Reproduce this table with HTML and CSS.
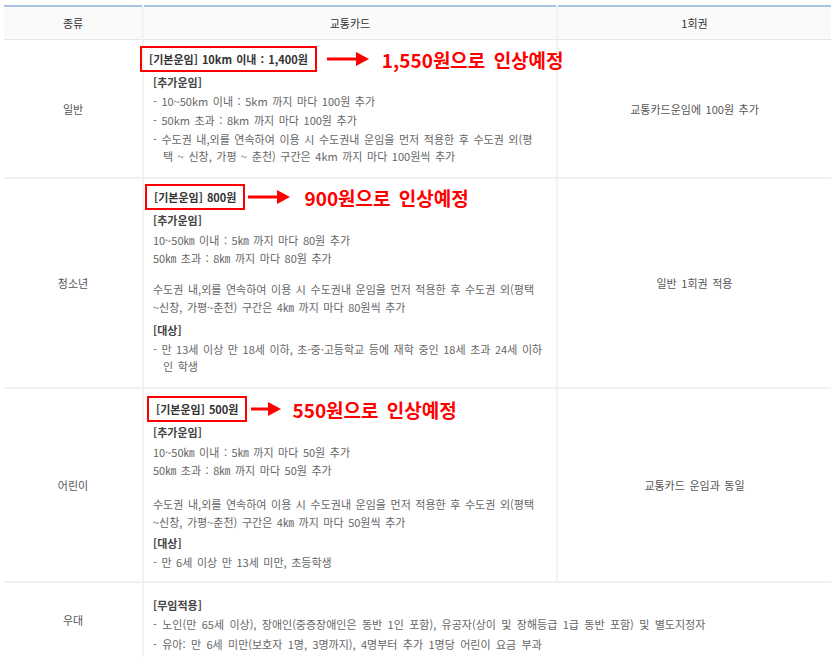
FILE: index.html
```html
<!DOCTYPE html>
<html lang="ko">
<head>
	<meta charset="UTF-8">
	<title>교통카드 운임</title>
	<link rel="stylesheet" href="styles.css">
</head>
<body>
	<table class="fare">
		<colgroup>
			<col class="c-type">
			<col class="c-card">
			<col class="c-ticket">
		</colgroup>
		<thead>
			<tr>
				<th>종류</th>
				<th>교통카드</th>
				<th>1회권</th>
			</tr>
		</thead>
		<tbody>
			<tr class="row-adult">
				<td class="type">일반</td>
				<td class="detail">
					<p class="base">
						<span class="box">[기본운임] 10km 이내 : 1,400원</span>
						<svg class="arrow" width="42" height="16" viewBox="0 0 42 16"><rect x="0" y="6.5" width="31" height="3" fill="#f00"/><polygon points="29,1 42,8 29,15" fill="#f00"/></svg>
						<span class="notice">1,550원으로 인상예정</span>
					</p>
					<p class="label">[추가운임]</p>
					<ul class="dash">
						<li>10~50km 이내 : 5km 까지 마다 100원 추가</li>
						<li>50km 초과 : 8km 까지 마다 100원 추가</li>
						<li>수도권 내,외를 연속하여 이용 시 수도권내 운임을 먼저 적용한 후 수도권 외(평<br>택 ~ 신창, 가평 ~ 춘천) 구간은 4km 까지 마다 100원씩 추가</li>
					</ul>
				</td>
				<td class="ticket">교통카드운임에 100원 추가</td>
			</tr>
			<tr class="row-youth">
				<td class="type">청소년</td>
				<td class="detail">
					<p class="base">
						<span class="box">[기본운임] 800원</span>
						<svg class="arrow" width="42" height="16" viewBox="0 0 42 16"><rect x="0" y="6.5" width="31" height="3" fill="#f00"/><polygon points="29,1 42,8 29,15" fill="#f00"/></svg>
						<span class="notice">900원으로 인상예정</span>
					</p>
					<p class="label">[추가운임]</p>
					<p class="plain">10~50㎞ 이내 : 5㎞ 까지 마다 80원 추가<br>50㎞ 초과 : 8㎞ 까지 마다 80원 추가</p>
					<p class="plain gap">수도권 내,외를 연속하여 이용 시 수도권내 운임을 먼저 적용한 후 수도권 외(평택<br>~신창, 가평~춘천) 구간은 4㎞ 까지 마다 80원씩 추가</p>
					<p class="label">[대상]</p>
					<ul class="dash">
						<li>만 13세 이상 만 18세 이하, 초·중·고등학교 등에 재학 중인 18세 초과 24세 이하<br>인 학생</li>
					</ul>
				</td>
				<td class="ticket">일반 1회권 적용</td>
			</tr>
			<tr class="row-child">
				<td class="type">어린이</td>
				<td class="detail">
					<p class="base">
						<span class="box">[기본운임] 500원</span>
						<svg class="arrow short" width="30" height="16" viewBox="0 0 30 16"><rect x="0" y="6.5" width="19" height="3" fill="#f00"/><polygon points="17,1 30,8 17,15" fill="#f00"/></svg>
						<span class="notice">550원으로 인상예정</span>
					</p>
					<p class="label">[추가운임]</p>
					<p class="plain">10~50㎞ 이내 : 5㎞ 까지 마다 50원 추가<br>50㎞ 초과 : 8㎞ 까지 마다 50원 추가</p>
					<p class="plain gap">수도권 내,외를 연속하여 이용 시 수도권내 운임을 먼저 적용한 후 수도권 외(평택<br>~신창, 가평~춘천) 구간은 4㎞ 까지 마다 50원씩 추가</p>
					<p class="label">[대상]</p>
					<ul class="dash">
						<li>만 6세 이상 만 13세 미만, 초등학생</li>
					</ul>
				</td>
				<td class="ticket">교통카드 운임과 동일</td>
			</tr>
			<tr class="row-free">
				<td class="type">우대</td>
				<td class="detail" colspan="2">
					<p class="label">[무임적용]</p>
					<ul class="dash">
						<li>노인(만 65세 이상), 장애인(중증장애인은 동반 1인 포함), 유공자(상이 및 장해등급 1급 동반 포함) 및 별도지정자</li>
						<li>유아: 만 6세 미만(보호자 1명, 3명까지), 4명부터 추가 1명당 어린이 요금 부과</li>
					</ul>
				</td>
			</tr>
		</tbody>
	</table>
</body>
</html>
```

FILE: styles.css
```css
*{
	margin: 0;
	padding: 0;
}
body{
	padding: 5px 0 0 4px;
	font-family: "Noto Sans CJK KR", "Noto Sans", sans-serif;
	font-size: 11px;
	color: #666;
	background-color: #fff;
	word-spacing: 1.5px;
}
.fare{
	width: 827px;
	border-collapse: collapse;
	table-layout: fixed;
	border-top: 2px solid #a9c3e3;
}
.c-type{
	width: 139px;
}
.c-card{
	width: 414px;
}
.c-ticket{
	width: 274px;
}
.fare th{
	height: 32px;
	background-color: #fafafa;
	font-weight: normal;
	color: #333;
	border-bottom: 1px solid #e5e5e5;
	border-left: 2px solid #f2f2f2;
}
.fare th:first-child{
	border-left: none;
}
.fare td{
	border-bottom: 2px solid #f0f0f0;
	border-left: 2px solid #f2f2f2;
	vertical-align: middle;
}
.fare td:first-child{
	border-left: none;
}
.fare .row-free td{
	border-bottom: none;
}
.type{
	text-align: center;
	color: #555;
}
.ticket{
	text-align: center;
	color: #555;
}
.detail{
	padding: 6px 10px 12px 9px;
	line-height: 17px;
}
.row-youth .detail{
	padding-top: 5px;
}
.row-child .detail{
	padding-top: 7px;
	padding-bottom: 10px;
}
.row-free .detail{
	padding-top: 12px;
	padding-bottom: 4px;
	word-spacing: 2.3px;
}
.base{
	display: flex;
	align-items: center;
	height: 26px;
	white-space: nowrap;
	word-spacing: 1.5px;
}
.base > *{
	flex-shrink: 0;
}
.box{
	border: 2px solid #f00;
	padding: 2px 7px 2px;
	margin-left: -13px;
	font-weight: bold;
	color: #333;
	line-height: 18px;
	word-spacing: 1px;
}
.row-youth .box{
	margin-left: -8px;
}
.row-child .box{
	margin-left: -6px;
}
.arrow{
	margin: 0 13px 0 10px;
}
.row-youth .arrow{
	margin: 0 14px 0 3px;
}
.arrow.short{
	margin: 0 11px 0 4px;
}
.notice{
	font-size: 19px;
	font-weight: bold;
	color: #f00;
	word-spacing: 3px;
}
.label{
	margin-top: 2px;
	margin-bottom: 2px;
	font-weight: bold;
	color: #444;
}
.plain{
	line-height: 18px;
}
.plain.gap{
	margin-top: 13px;
}
.row-child .plain.gap{
	margin-top: 16px;
}
.plain + .label{
	margin-top: 6px;
}
.row-child .plain + .label{
	margin-top: 4px;
}
.dash{
	list-style: none;
}
.dash li{
	padding-left: 10px;
	text-indent: -10px;
}
.dash li:before{
	content: "- ";
}
.dash li + li{
	margin-top: 2px;
}
.row-free .dash li + li{
	margin-top: 3px;
}
```
